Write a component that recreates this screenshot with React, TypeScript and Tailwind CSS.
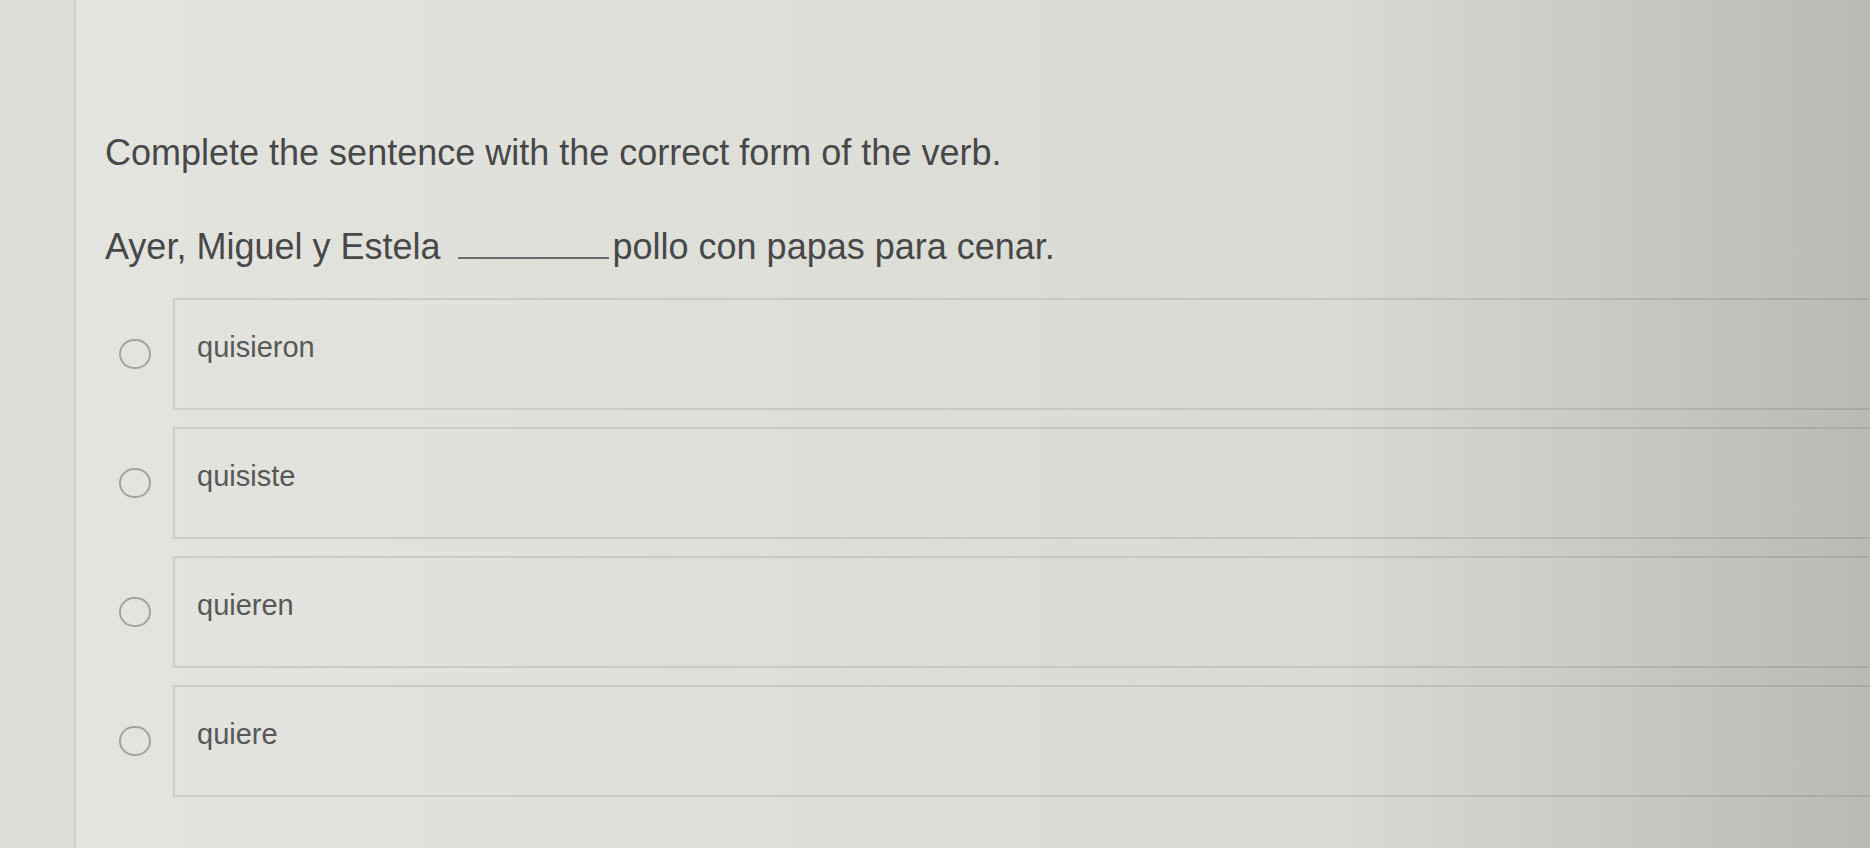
import { useState } from 'react'

const OPTIONS = ['quisieron', 'quisiste', 'quieren', 'quiere']

export default function App() {
  const [selected, setSelected] = useState<number | null>(null)

  return (
    <div
      className="flex h-[848px] w-full overflow-hidden bg-linear-to-r from-[#e4e5e0] via-[#d9dad4] via-72% to-[#b9bab4] text-[#484848]"
      style={{ fontFamily: '"Liberation Sans", Arial, sans-serif' }}
    >
      {/* left page edge */}
      <div className="w-[76px] shrink-0 border-r-2 border-[#cdcec8] bg-[#dcddd8]" />

      <div className="flex min-w-0 flex-1 flex-col pl-[29px] pt-[133px]">
        <h1 className="text-[36px] leading-[40px] font-normal">
          Complete the sentence with the correct form of the verb.
        </h1>

        <p className="mt-[54px] text-[36px] leading-[40px]">
          Ayer, Miguel y Estela{' '}
          <span className="ml-[7px] inline-block h-[30px] w-[151px] border-b-2 border-[#6a6a6a]" />
          <span className="ml-[4px]">pollo con papas para cenar.</span>
        </p>

        <div className="mt-[31px] flex flex-col gap-[17px]">
          {OPTIONS.map((opt, i) => (
            <div key={opt} className="flex items-center">
              <button
                onClick={() => setSelected(i)}
                className="ml-[14px] mr-[22px] flex h-[30px] w-[32px] shrink-0 items-center justify-center rounded-full border-2 border-[#a3a4a0]"
              >
                {selected === i && <span className="h-[14px] w-[14px] rounded-full bg-[#666]" />}
              </button>
              <div className="-mr-[40px] flex h-[112px] flex-1 items-center border-2 border-black/[0.09] pl-[22px]">
                <span className="mb-[14px] text-[29px] leading-[34px] text-[#585858]">{opt}</span>
              </div>
            </div>
          ))}
        </div>
      </div>
    </div>
  )
}
